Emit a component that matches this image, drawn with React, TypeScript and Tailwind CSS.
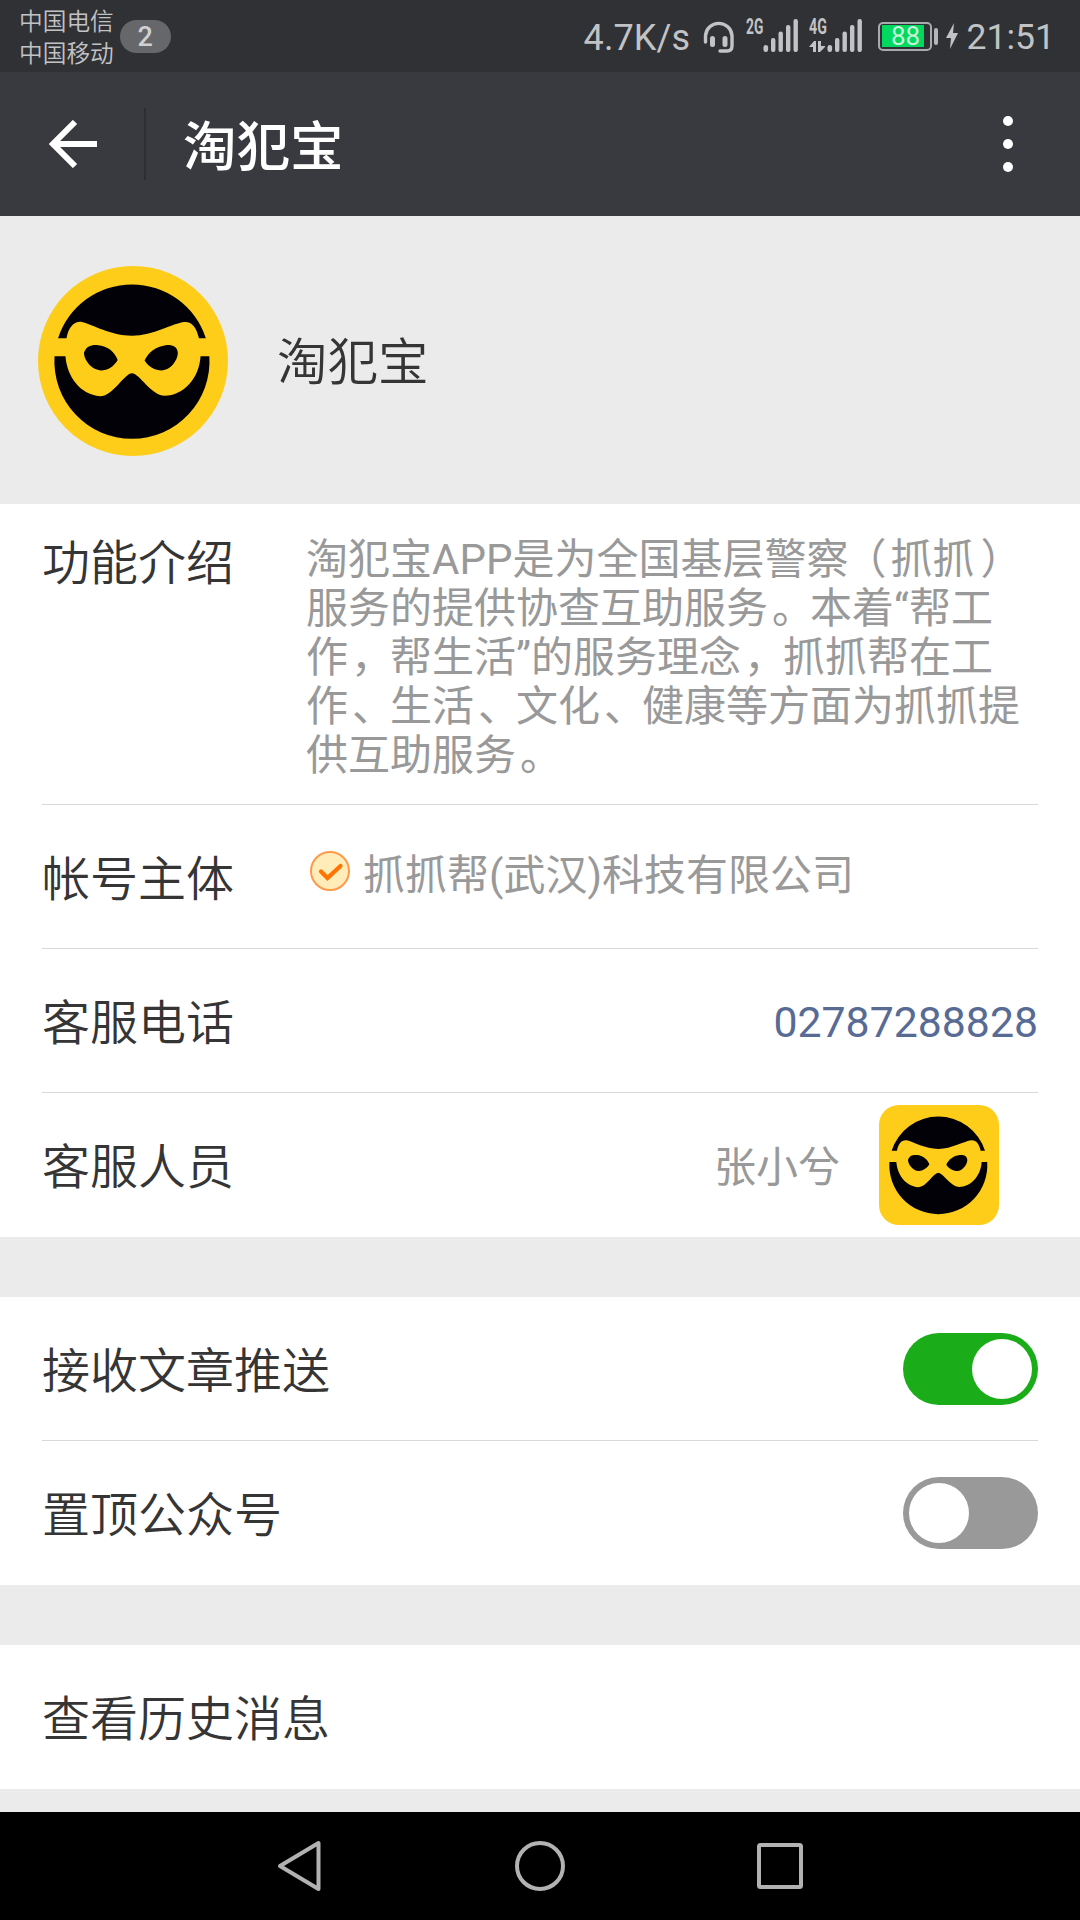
import React, { useState } from "react";

interface RowProps {
  label: string;
  last?: boolean;
  children?: React.ReactNode;
}

interface ToggleProps {
  checked: boolean;
  onChange: () => void;
}

const introLines = [
  "淘犯宝APP是为全国基层警察（抓抓）",
  "服务的提供协查互助服务。本着“帮工",
  "作，帮生活”的服务理念，抓抓帮在工",
  "作、生活、文化、健康等方面为抓抓提",
  "供互助服务。",
];

// Full-width punctuation sits nearer the middle of its cell
const punctuation: Record<string, string> = {
  "（": "inline-block -translate-x-1",
  "）": "inline-block translate-x-1.5",
  "。": "inline-block translate-x-1",
  "、": "inline-block translate-x-1",
  "，": "inline-block translate-x-[3px]",
};

// Masked face logo, used for the account and for the service contact
const MaskLogo = ({ className }: { className: string }) => (
  <svg viewBox="0 0 360 360" className={className}>
    <rect width="360" height="360" fill="#fdcd1a" />
    <g fill="#020108">
      <path d="M38 137A147 147 0 0 1 318 137H305C300 116 292 105 277 106C256 108 218 132 178 132C138 132 104 111 83 106C68 104 58 116 54 137Z" />
      <path d="M31.3 171H52C55 208 78 243 118 247C143 245 163 204 178 203C193 204 213 244 240 246C276 245 305 214 308 171H324.7A147 147 0 1 1 31.3 171Z" />
      <path d="M87 165C91 152 101 149 114 150C131 151 146 163 151 178C144 190 132 198 119 198C103 197 88 181 87 165Z" />
      <path d="M265 165C264 152 254 149 242 150C224 152 208 164 202 179C208 190 222 198 235 198C250 197 264 181 265 165Z" />
    </g>
  </svg>
);

const SignalBars = () => (
  <svg viewBox="0 0 36 34" className="h-[34px] w-9" fill="#c2c3c5">
    <rect x="0.5" y="26" width="4.6" height="7" rx="2.3" />
    <rect x="8" y="19" width="4.4" height="14" rx="2" />
    <rect x="15.5" y="12.5" width="4.4" height="20.5" rx="2" />
    <rect x="23" y="6" width="4.4" height="27" rx="2" />
    <rect x="30.5" y="0" width="4.4" height="33" rx="2" />
  </svg>
);

const StatusBar = () => (
  <div className="flex h-[72px] items-center bg-[#303135] pl-[19px] text-[#c2c3c5]">
    <div className="pt-1 text-[23.7px] leading-[32.5px] font-[350] text-[#c2c3c5]">
      <p>中国电信</p>
      <p>中国移动</p>
    </div>
    <div className="ml-1.5 flex h-[33px] w-[51px] items-center justify-center rounded-full bg-[#66676b] pt-0.5 text-[27px] font-medium text-[#d0d0d2]">
      2
    </div>
    <div className="ml-auto flex h-full items-center pr-[25px]">
      <span className="w-[119px] pt-[3px] text-[36px] tracking-[0.1px]">
        4.7K/s
      </span>
      <svg viewBox="0 0 32 34" className="mt-0.5 h-[34px] w-8" fill="none">
        <path
          d="M2.5 22V15.5A13.3 13.3 0 0 1 29 15.5V26Q29 31 24 31H17"
          stroke="#c2c3c5"
          strokeWidth="3.4"
          strokeLinecap="round"
        />
        <path
          d="M9.5 18.5V24.5M22 18.5V24.5"
          stroke="#c2c3c5"
          strokeWidth="5"
          strokeLinecap="round"
        />
      </svg>
      <div className="ml-[11px] flex h-[34px]">
        <span className="w-[17px] origin-left scale-x-[0.64] text-[21.5px] leading-[15px] font-bold">
          2G
        </span>
        <SignalBars />
      </div>
      <div className="ml-[10px] flex h-[34px]">
        <div className="w-[18px]">
          <span className="block w-[18px] origin-left scale-x-[0.66] text-[21.5px] leading-[15px] font-bold">
            4G
          </span>
          <svg
            viewBox="0 0 18 12"
            className="mt-[7px] h-3 w-[18px]"
            fill="#c2c3c5"
          >
            <path d="M0 6L5 0H7V11H4V6ZM9 0H12V5H16V6L11 11H9Z" />
          </svg>
        </div>
        <SignalBars />
      </div>
      <div className="ml-[15px] flex h-[29px] w-[54px] items-center rounded-[5px] border-2 border-[#a9aaac] pl-[2px]">
        <div className="flex h-[22px] w-[42px] items-center justify-center bg-[#00d95f] pl-1.5 text-[26px] leading-none text-[#c8f5d8]">
          88
        </div>
      </div>
      <div className="ml-[2px] h-[17px] w-1 rounded-sm bg-[#b5b6b8]" />
      <svg viewBox="0 0 12 26" className="ml-2 h-[26px] w-3" fill="#c2c3c5">
        <path d="M8 0L0 15H5L4 26L12 10H7Z" />
      </svg>
      <span className="ml-[9px] pt-[3px] text-[35.5px]">21:51</span>
    </div>
  </div>
);

const Header = () => (
  <header className="flex h-36 items-center bg-[#393a3f] text-white">
    <svg viewBox="0 0 48 48" className="ml-[49px] h-12 w-12" fill="none">
      <path d="M48 24H5M26 2L4 24L26 46" stroke="white" strokeWidth="6" />
    </svg>
    <div className="ml-[47px] h-[72px] w-0.5 bg-[#2e2f33]" />
    <h1 className="mt-[7px] ml-[37px] text-[53.5px] leading-none font-medium">
      淘犯宝
    </h1>
    <div className="mr-[67px] ml-auto flex flex-col gap-[13px]">
      <span className="h-2.5 w-2.5 rounded-full bg-white" />
      <span className="h-2.5 w-2.5 rounded-full bg-white" />
      <span className="h-2.5 w-2.5 rounded-full bg-white" />
    </div>
  </header>
);

const Row: React.FC<RowProps> = ({ label, last, children }) => (
  <div
    className={`flex h-36 items-center border-[#d9d9d9] ${
      last ? "" : "border-b"
    }`}
  >
    <span className="w-[264px] shrink-0 pt-1.5 text-[48px] leading-none font-[350] whitespace-nowrap">
      {label}
    </span>
    {children}
  </div>
);

const Toggle: React.FC<ToggleProps> = ({ checked, onChange }) => (
  <button
    role="switch"
    aria-checked={checked}
    onClick={onChange}
    className={`ml-auto flex h-[72px] w-[135px] items-center rounded-full p-1.5 ${
      checked ? "justify-end bg-[#1aad19]" : "justify-start bg-[#999999]"
    }`}
  >
    <span className="h-[60px] w-[60px] rounded-full bg-white" />
  </button>
);

const NavBar = () => (
  <nav className="flex h-[108px] items-center justify-center gap-[190px] bg-black">
    <svg viewBox="0 0 50 54" className="h-[54px] w-[50px]" fill="none" stroke="#b2b2b2">
      <path d="M43.5 4V50L5 27Z" strokeWidth="4" strokeLinejoin="round" />
    </svg>
    <svg viewBox="0 0 50 50" className="h-[50px] w-[50px]" fill="none" stroke="#b2b2b2">
      <circle cx="25" cy="25" r="23" strokeWidth="4" />
    </svg>
    <svg viewBox="0 0 50 50" className="h-[50px] w-[50px]" fill="none" stroke="#b2b2b2">
      <rect x="4" y="4" width="42" height="42" rx="1.5" strokeWidth="4" />
    </svg>
  </nav>
);

const App: React.FC = () => {
  const [push, setPush] = useState(true);
  const [pinned, setPinned] = useState(false);

  return (
    <div
      lang="zh-CN"
      className="flex h-[1920px] w-[1080px] flex-col overflow-hidden bg-[#ebebeb] font-[Roboto,'Noto_Sans_CJK_SC',sans-serif] text-[#353535]"
    >
      <StatusBar />
      <Header />

      <main className="flex-1">
        <section className="flex h-72 items-center pl-[38px]">
          <MaskLogo className="mt-0.5 h-[190px] w-[190px] rounded-full" />
          <h2 className="mt-1.5 ml-[49px] text-[50.5px] leading-none font-[350]">
            淘犯宝
          </h2>
        </section>

        <section className="bg-white px-[42px]">
          <div className="flex h-[301px] border-b border-[#d9d9d9] pt-[31px]">
            <span className="mt-[5px] w-[264px] shrink-0 text-[48px] leading-none font-[350]">
              功能介绍
            </span>
            <div className="text-[42px] leading-[49px] whitespace-nowrap text-[#999999]">
              {introLines.map((line) => (
                <p key={line}>
                  {line.split(/([（）。、，])/).map((part, i) =>
                    punctuation[part] ? (
                      <span key={i} className={punctuation[part]}>
                        {part}
                      </span>
                    ) : (
                      part
                    )
                  )}
                </p>
              ))}
            </div>
          </div>
          <Row label="帐号主体">
            <svg viewBox="0 0 40 40" className="mb-[11px] ml-1 h-10 w-10" fill="none">
              <circle cx="20" cy="20" r="19" fill="#ffecb8" stroke="#ff9a4a" strokeWidth="2" />
              <path
                d="M11 20.5L17.5 27L30.5 15"
                stroke="#ff7300"
                strokeWidth="4.2"
                strokeLinecap="round"
              />
            </svg>
            <span className="mb-0.5 ml-[13px] text-[42px] leading-none text-[#999999]">
              抓抓帮(武汉)科技有限公司
            </span>
          </Row>
          <Row label="客服电话">
            <a className="ml-auto pt-1 text-[42.8px] leading-none text-[#576b95]">
              02787288828
            </a>
          </Row>
          <Row label="客服人员" last>
            <span className="ml-auto pt-1.5 text-[42px] leading-none text-[#999999]">
              张小兮
            </span>
            <MaskLogo className="mr-[39px] ml-[39px] h-[120px] w-[120px] rounded-[20px]" />
          </Row>
        </section>

        <section className="mt-[60px] bg-white px-[42px]">
          <Row label="接收文章推送">
            <Toggle checked={push} onChange={() => setPush(!push)} />
          </Row>
          <Row label="置顶公众号" last>
            <Toggle checked={pinned} onChange={() => setPinned(!pinned)} />
          </Row>
        </section>

        <section className="mt-[60px] bg-white px-[42px]">
          <Row label="查看历史消息" last />
        </section>
      </main>

      <NavBar />
    </div>
  );
};

export default App;
